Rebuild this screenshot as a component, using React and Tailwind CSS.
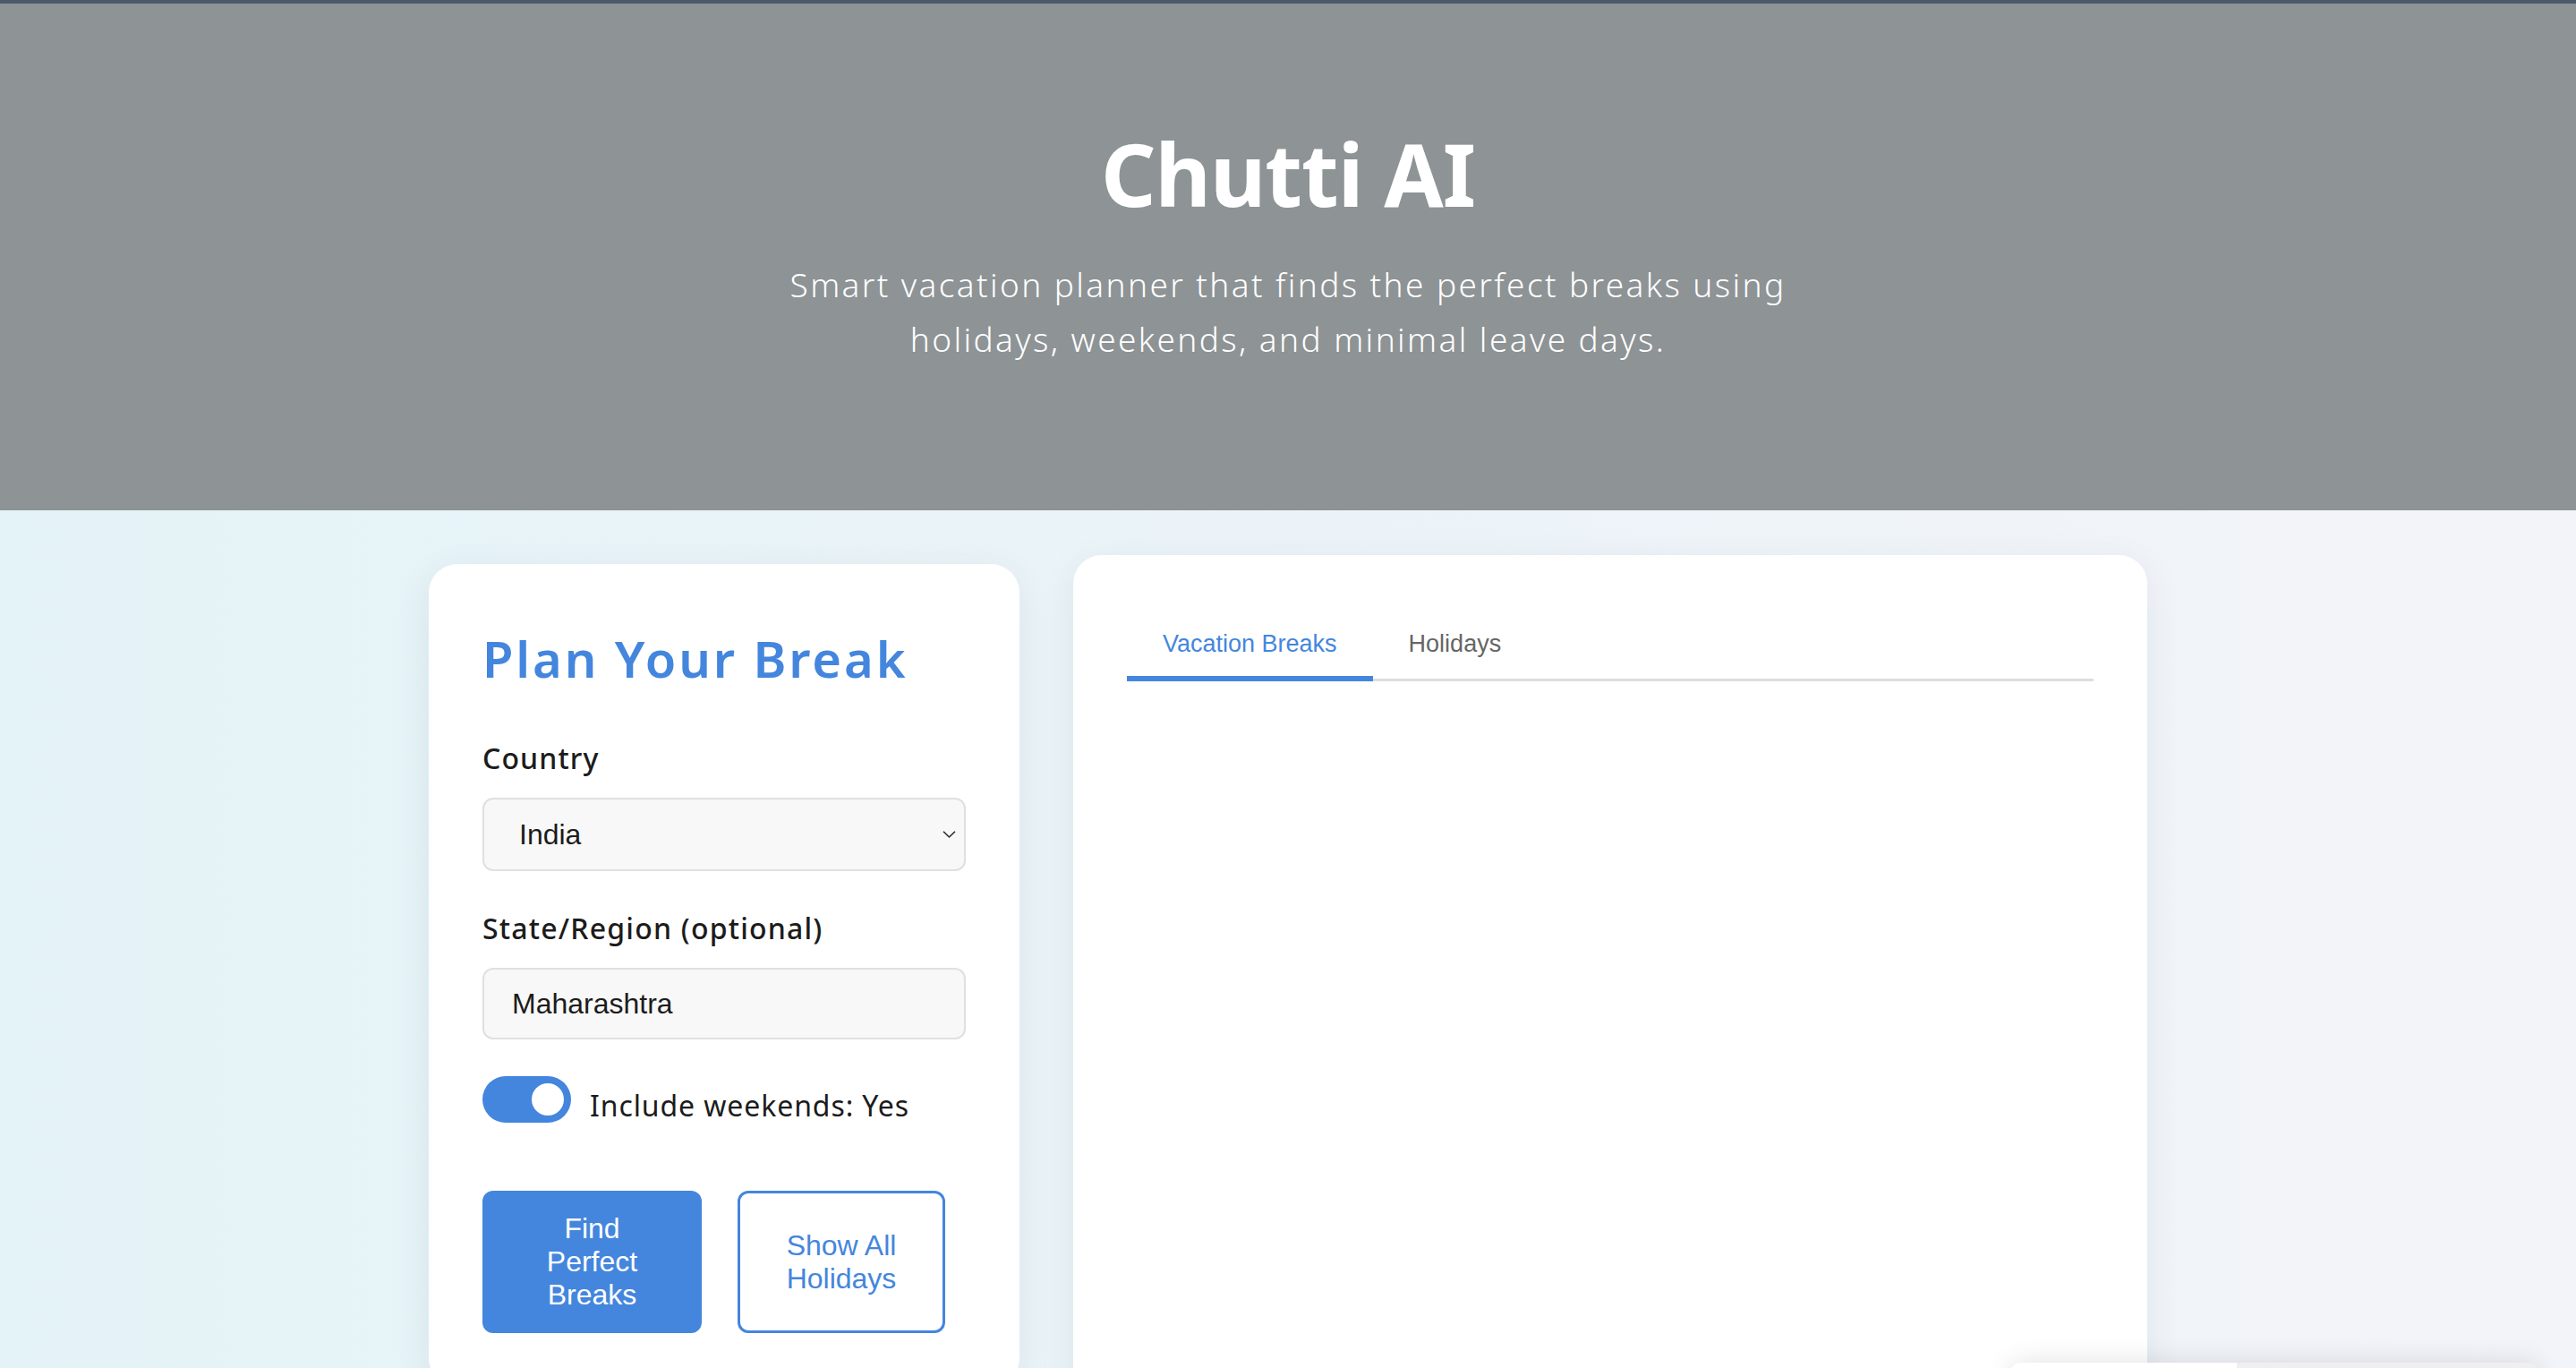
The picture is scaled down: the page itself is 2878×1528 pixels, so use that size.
import { useState } from "react";

function Toggle({ on, onChange }) {
  return (
    <button
      type="button"
      onClick={() => onChange(!on)}
      className={`flex h-[52px] w-[99px] shrink-0 items-center rounded-full px-[8px] ${
        on ? "justify-end bg-[#4486dd]" : "justify-start bg-[#cfd4da]"
      }`}
    >
      <span className="block h-[36px] w-[36px] rounded-full bg-white" />
    </button>
  );
}

export default function App() {
  const [weekends, setWeekends] = useState(true);
  const [tab, setTab] = useState("breaks");

  return (
    <div className="min-h-screen bg-linear-to-r from-[#e4f3f7] to-[#f3f4f9] font-['Noto_Sans',sans-serif]">
      <header className="flex h-[570px] flex-col items-center border-t-4 border-[#4b5a68] bg-[#8e9395] pt-[132px] text-white">
        <h1 className="text-[96px] font-bold leading-[1.2] tracking-[-1px]">Chutti AI</h1>
        <p className="mt-[36px] text-center text-[37px] font-light leading-[61px] tracking-[2.4px]">
          Smart vacation planner that finds the perfect breaks using
          <br />
          holidays, weekends, and minimal leave days.
        </p>
      </header>

      <main className="mx-auto flex w-[1920px] items-start gap-[60px] pt-[50px]">
        <section className="mt-[10px] w-[660px] shrink-0 rounded-[32px] bg-white px-[60px] pt-[72px] pb-[60px] shadow-[0_10px_40px_rgba(30,60,80,0.08)]">
          <h2 className="text-[56px] font-semibold leading-[1.2] tracking-[2.9px] text-[#4486dd]">
            Plan Your Break
          </h2>

          <label className="mt-[54px] block text-[32px] font-medium leading-[48px] tracking-[1.1px] text-[#1c1c1c]">
            Country
          </label>
          <div className="relative mt-[20px]">
            <select
              defaultValue="India"
              className="h-[82px] w-full appearance-none rounded-[12px] border-2 border-[#e0e0e0] bg-[#f8f8f8] pl-[39px] font-['Liberation_Sans',Arial,sans-serif] text-[32px] text-[#1c1c1c] outline-none"
            >
              <option>India</option>
              <option>United States</option>
              <option>United Kingdom</option>
            </select>
            <svg
              className="pointer-events-none absolute right-[11px] top-1/2 -translate-y-1/2"
              width="15"
              height="9"
              viewBox="0 0 15 9"
              fill="none"
            >
              <path d="M1 1.2l6.5 6.3 6.5-6.3" stroke="#2b2b2b" strokeWidth="1.6" />
            </svg>
          </div>

          <label className="mt-[40px] block text-[32px] font-medium leading-[48px] tracking-[1.2px] text-[#1c1c1c]">
            State/Region (optional)
          </label>
          <input
            defaultValue="Maharashtra"
            className="mt-[20px] block h-[80px] w-full rounded-[12px] border-2 border-[#e0e0e0] bg-[#f8f8f8] px-[31px] font-['Liberation_Sans',Arial,sans-serif] text-[32px] text-[#1c1c1c] outline-none"
          />

          <div className="mt-[41px] flex items-start gap-[21px]">
            <Toggle on={weekends} onChange={setWeekends} />
            <span className="mt-[9px] text-[32px] leading-[48px] tracking-[0.9px] text-[#1c1c1c]">
              Include weekends: {weekends ? "Yes" : "No"}
            </span>
          </div>

          <div className="mt-[71px] flex gap-[40px] font-['Liberation_Sans',Arial,sans-serif] text-[32px] leading-[37px]">
            <button className="flex h-[159px] w-[245px] flex-col items-center justify-center rounded-[12px] bg-[#4486dd] text-white">
              <span>Find</span>
              <span>Perfect</span>
              <span>Breaks</span>
            </button>
            <button className="flex h-[159px] w-[232px] flex-col items-center justify-center rounded-[12px] border-[3px] border-[#4486dd] bg-white text-[#4486dd]">
              <span>Show All</span>
              <span>Holidays</span>
            </button>
          </div>
        </section>

        <section className="min-h-[980px] w-[1200px] shrink-0 rounded-[32px] bg-white px-[60px] pt-[60px] shadow-[0_10px_40px_rgba(30,60,80,0.08)]">
          <div className="flex border-b-[3px] border-[#dddddd] font-['Liberation_Sans',Arial,sans-serif] text-[27px] leading-[32px]">
            <button
              onClick={() => setTab("breaks")}
              className={`-mb-[3px] px-[40px] pt-[23px] pb-[20px] ${
                tab === "breaks"
                  ? "border-b-[6px] border-[#4486dd] text-[#4486dd]"
                  : "border-b-[6px] border-transparent text-[#666666]"
              }`}
            >
              Vacation Breaks
            </button>
            <button
              onClick={() => setTab("holidays")}
              className={`-mb-[3px] px-[40px] pt-[23px] pb-[20px] ${
                tab === "holidays"
                  ? "border-b-[6px] border-[#4486dd] text-[#4486dd]"
                  : "border-b-[6px] border-transparent text-[#666666]"
              }`}
            >
              Holidays
            </button>
          </div>
        </section>
      </main>

      <div className="fixed left-[2246px] top-[1522px] flex h-[40px] w-[590px] overflow-hidden rounded-t-[12px] shadow-[0_0_30px_rgba(0,0,0,0.12)]">
        <div className="w-[253px] bg-white" />
        <div className="flex-1 bg-[#efefef]" />
      </div>
    </div>
  );
}
